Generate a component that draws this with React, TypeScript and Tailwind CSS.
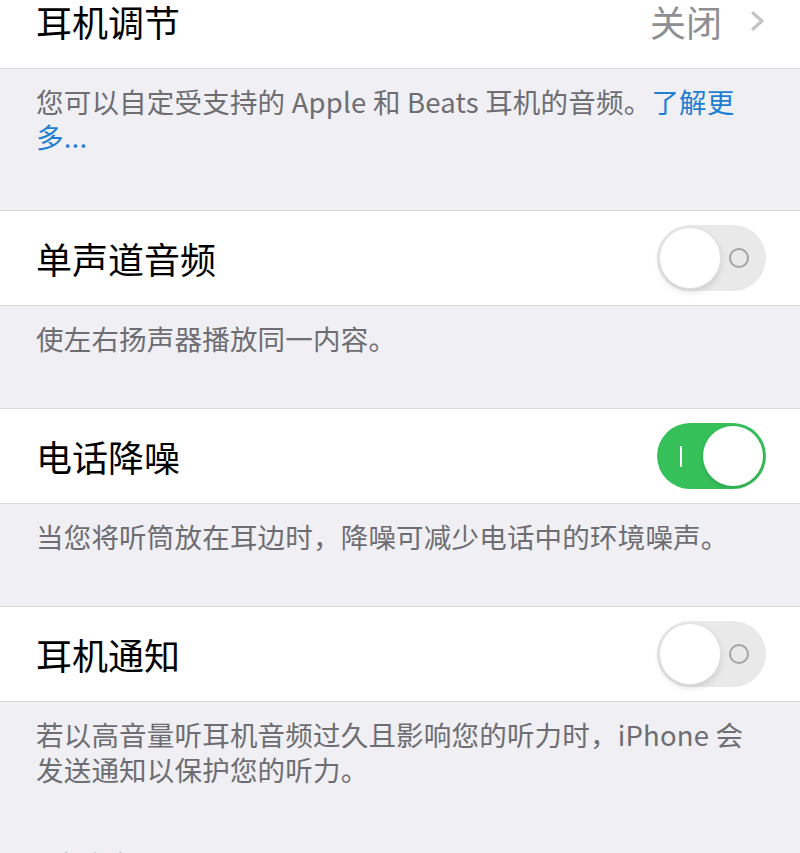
import { FC, ReactNode } from "react";

const font = {
  fontFamily: '"Noto Sans CJK SC", "Noto Sans", sans-serif',
};

const Chevron: FC = () => (
  <svg width="16" height="20" viewBox="0 0 16 20" className="block">
    <polyline
      points="3,2 12,10 3,18"
      fill="none"
      stroke="#c4c4c7"
      strokeWidth="3.2"
      strokeLinecap="round"
      strokeLinejoin="round"
    />
  </svg>
);

const Toggle: FC<{ on?: boolean }> = ({ on }) => {
  if (on) {
    return (
      <div className="relative h-[66px] w-[109px] shrink-0 rounded-full bg-[#35c05a]">
        <div className="absolute left-[23px] top-[23px] h-[21px] w-[2px] rounded-full bg-white" />
        <div className="absolute right-[3px] top-[3px] size-[60px] rounded-full bg-white shadow-[0_2px_4px_rgba(0,0,0,0.15)]" />
      </div>
    );
  }
  return (
    <div className="relative h-[66px] w-[109px] shrink-0 rounded-full bg-[#e9e9ea]">
      <div className="absolute left-[72px] top-[23px] size-[20px] rounded-full border-2 border-[#a3a3a6]" />
      <div className="absolute left-[2px] top-[2px] size-[62px] rounded-full border border-[#e2e2e4] bg-white shadow-[0_3px_6px_rgba(0,0,0,0.12)]" />
    </div>
  );
};

const Row: FC<{ title: string; className?: string; children?: ReactNode }> = ({
  title,
  className = "",
  children,
}) => (
  <div
    className={`flex h-[96px] items-center justify-between border-y border-[#d9d9dc] bg-white pl-[36px] pr-[34px] ${className}`}
  >
    <span className="text-[36px] leading-none text-black">{title}</span>
    {children}
  </div>
);

const Footer: FC<{ className?: string; children: ReactNode }> = ({
  className = "pb-[52px]",
  children,
}) => (
  <div
    className={`pl-[36px] pr-[48px] pt-[15px] text-[27.5px] leading-[35px] tracking-[0.2px] text-[#6d6d72] ${className}`}
  >
    {children}
  </div>
);

export default function App() {
  return (
    <div
      className="h-[853px] w-[800px] overflow-hidden bg-[#efeff4]"
      style={font}
    >
      <Row title="耳机调节" className="-mt-[27px] border-t-0">
        <div className="flex items-center gap-[28px]">
          <span className="text-[36px] leading-none text-[#8e8e93]">关闭</span>
          <Chevron />
        </div>
      </Row>
      <Footer className="pb-[56px]">
        您可以自定受支持的 Apple 和 Beats 耳机的音频。
        <span className="text-[#1f7fd2]">了解更多...</span>
      </Footer>

      <Row title="单声道音频">
        <Toggle />
      </Row>
      <Footer>使左右扬声器播放同一内容。</Footer>

      <Row title="电话降噪">
        <Toggle on />
      </Row>
      <Footer>当您将听筒放在耳边时，降噪可减少电话中的环境噪声。</Footer>

      <Row title="耳机通知">
        <Toggle />
      </Row>
      <Footer>
        若以高音量听耳机音频过久且影响您的听力时，iPhone 会发送通知以保护您的听力。
      </Footer>

      <div className="mt-[6px] px-[36px] text-[24px] leading-[35px] text-[#6d6d72]">
        耳机安全
      </div>
    </div>
  );
}
